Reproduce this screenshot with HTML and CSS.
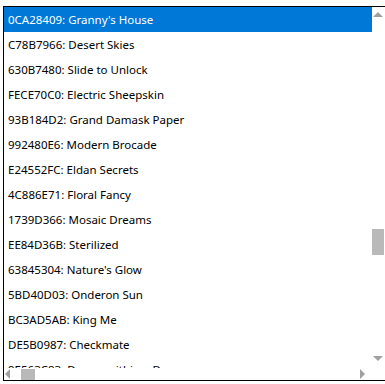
FILE: index.html
```html
<!DOCTYPE html>
<html lang="en">
<head>
    <meta charset="UTF-8">
    <meta name="viewport" content="width=device-width, initial-scale=1.0">
    <title>Patterns</title>
    <link rel="stylesheet" href="styles.css">
</head>
<body>

    <div class="listbox">
        <div class="items">
            <div class="item selected">0CA28409: Granny's House</div>
            <div class="item">C78B7966: Desert Skies</div>
            <div class="item">630B7480: Slide to Unlock</div>
            <div class="item">FECE70C0: Electric Sheepskin</div>
            <div class="item">93B184D2: Grand Damask Paper</div>
            <div class="item">992480E6: Modern Brocade</div>
            <div class="item">E24552FC: Eldan Secrets</div>
            <div class="item">4C886E71: Floral Fancy</div>
            <div class="item">1739D366: Mosaic Dreams</div>
            <div class="item">EE84D36B: Sterilized</div>
            <div class="item">63845304: Nature's Glow</div>
            <div class="item">5BD40D03: Onderon Sun</div>
            <div class="item">BC3AD5AB: King Me</div>
            <div class="item">DE5B0987: Checkmate</div>
            <div class="item">9E563C83: Dream within a Dream</div>
        </div>

        <div class="vscroll">
            <div class="arrow up"></div>
            <div class="vthumb"></div>
            <div class="arrow down"></div>
        </div>

        <div class="hscroll">
            <div class="arrow left"></div>
            <div class="hthumb"></div>
            <div class="arrow right"></div>
        </div>

        <div class="corner"></div>
    </div>

</body>
</html>
```

FILE: styles.css
```css
body {
    margin: 6px 0 0 3px;
    background: #fff;
    font-family: "Noto Sans", "Open Sans", sans-serif;
    font-size: 11.5px;
}
.listbox {
    width: 382px;
    height: 373px;
    border: 1px solid #000;
    border-right: none;
    display: grid;
    grid-template-columns: 368px 13px;
    grid-template-rows: 361px 12px;
    background: #fff;
}
.items {
    overflow: hidden;
}
.item {
    height: 25px;
    line-height: 26px;
    padding-left: 4px;
    color: #000;
    white-space: nowrap;
}
.item.selected {
    background: #0078d7;
    color: #fff;
}
.vscroll {
    display: flex;
    flex-direction: column;
    width: 12px;
}
.vthumb {
    width: 12px;
    height: 26px;
    margin-top: 212px;
    background: #b9b9b9;
}
.hscroll {
    display: flex;
    align-items: center;
    height: 12px;
}
.hthumb {
    width: 14px;
    height: 11px;
    margin-left: 11px;
    margin-top: 1px;
    background: #b9b9b9;
}
.corner {
    background: #fff;
}
.arrow {
    width: 0;
    height: 0;
    border: 0 solid transparent;
}
.arrow.up {
    margin: 5px 0 0 1px;
    border-width: 0 5px 5px 5px;
    border-bottom-color: #a0a0a0;
}
.arrow.down {
    margin: 101px 0 0 1px;
    border-width: 5px 5px 0 5px;
    border-top-color: #a0a0a0;
}
.arrow.left {
    margin-left: 1px;
    border-width: 5px 5px 5px 0;
    border-right-color: #a0a0a0;
}
.arrow.right {
    margin-left: 325px;
    border-width: 5px 0 5px 5px;
    border-left-color: #a0a0a0;
}
```
